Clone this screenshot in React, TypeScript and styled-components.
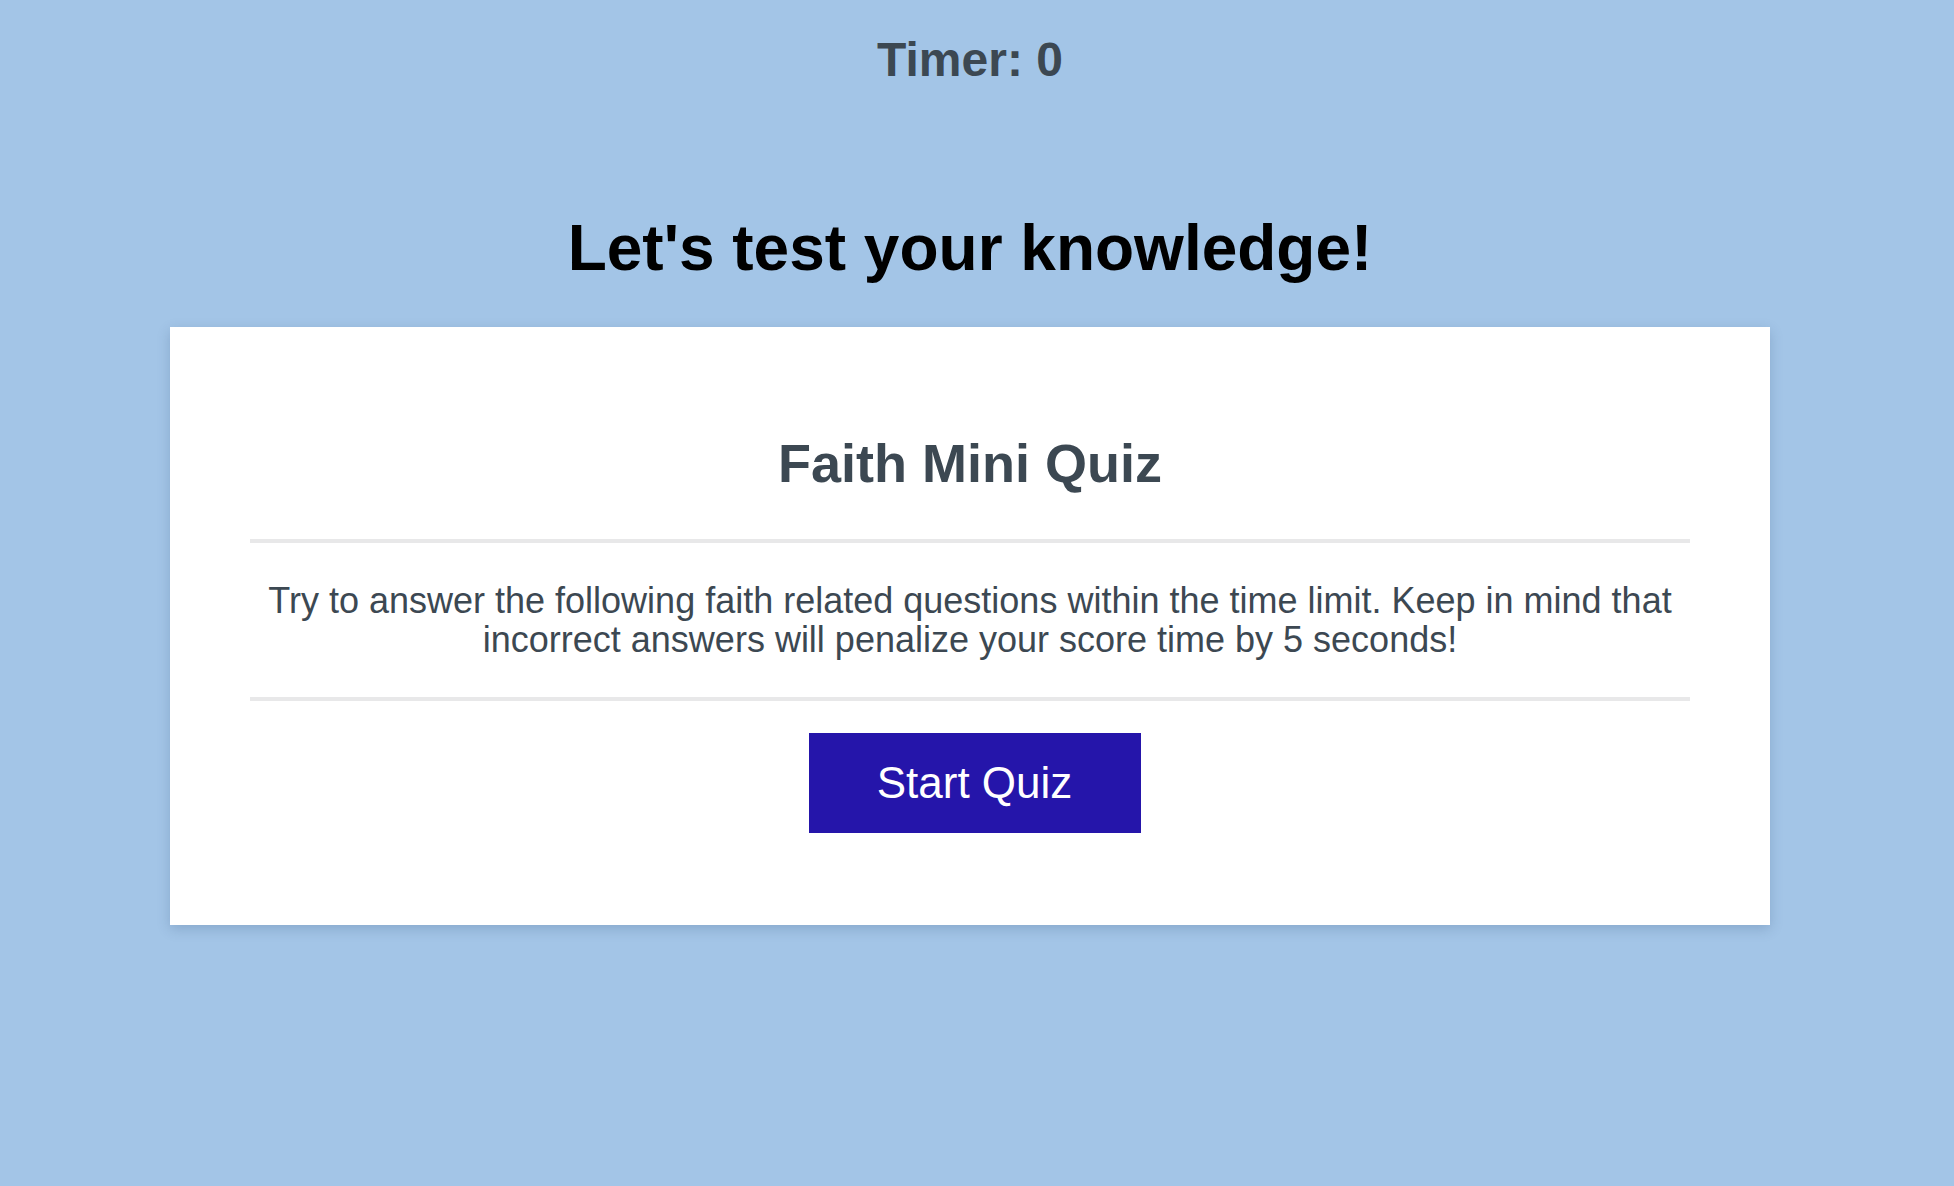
import React from "react";
import styled, { createGlobalStyle } from "styled-components";

const GlobalStyle = createGlobalStyle`
  html, body {
    margin: 0;
    padding: 0;
    background: #a3c5e7;
    font-family: "Liberation Sans", Arial, Helvetica, sans-serif;
  }
`;

const Page = styled.div`
  min-height: 1186px;
  padding-right: 14px;
  display: flex;
  flex-direction: column;
  align-items: center;
`;

const Timer = styled.div`
  margin-top: 32px;
  font-size: 48px;
  line-height: 56px;
  font-weight: 700;
  color: #3c4852;
`;

const Heading = styled.h1`
  margin: 123px 0 42px;
  font-size: 64px;
  line-height: 74px;
  font-weight: 700;
  color: #000;
`;

const Card = styled.section`
  width: 1600px;
  box-sizing: border-box;
  background: #fff;
  padding: 105px 80px 92px;
  box-shadow: 0 4px 12px rgba(40, 70, 110, 0.22);
  display: flex;
  flex-direction: column;
  align-items: center;
  color: #3c4852;
`;

const Title = styled.h2`
  margin: 0;
  font-size: 54px;
  line-height: 62px;
  font-weight: 700;
`;

const Divider = styled.hr<{ $gap: number }>`
  align-self: stretch;
  height: 4px;
  border: none;
  background: #e8e8e9;
  margin: ${(p) => p.$gap}px 0 0;
`;

const Intro = styled.p`
  margin: 38px 0 0;
  font-size: 36px;
  line-height: 39px;
  text-align: center;
`;

const StartButton = styled.button`
  margin: 32px 0 0 9px;
  width: 332px;
  height: 100px;
  border: none;
  border-radius: 0;
  background: #2515aa;
  color: #fff;
  font-family: inherit;
  font-size: 44px;
  display: flex;
  align-items: center;
  justify-content: center;
  cursor: pointer;
`;

export default function App() {
  return (
    <>
      <GlobalStyle />
      <Page>
        <Timer>Timer: 0</Timer>
        <Heading>Let's test your knowledge!</Heading>
        <Card>
          <Title>Faith Mini Quiz</Title>
          <Divider $gap={45} />
          <Intro>
            Try to answer the following faith related questions within the time
            limit. Keep in mind that incorrect answers will penalize your score
            time by 5 seconds!
          </Intro>
          <Divider $gap={38} />
          <StartButton>Start Quiz</StartButton>
        </Card>
      </Page>
    </>
  );
}
